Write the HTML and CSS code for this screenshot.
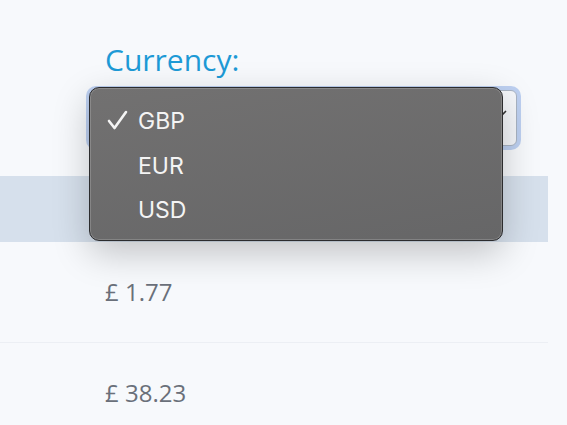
FILE: index.html
```html
<!DOCTYPE html>
<html>
<head>
<meta charset="UTF-8">
<title>Currency</title>
<link rel="stylesheet" href="styles.css">
</head>
<body>

<div class="filter">
	<label class="filter-label">Currency:</label>
	<div class="select">
		<svg class="chevron" width="14" height="10" viewBox="0 0 14 10"><path d="M2 2 L7 7 L12 2" fill="none" stroke="#333" stroke-width="1.6"/></svg>
	</div>

	<!-- open dropdown menu -->
	<ul class="menu">
		<li class="menu-item checked">
			<svg class="check" width="22" height="22" viewBox="0 0 22 22"><path d="M3 12 L8.5 19 L20 3" fill="none" stroke="#f4f4f4" stroke-width="2.6" stroke-linecap="round" stroke-linejoin="round"/></svg>
			GBP
		</li>
		<li class="menu-item">EUR</li>
		<li class="menu-item">USD</li>
	</ul>
</div>

<div class="list">
	<div class="row head"></div>
	<div class="row">£ 1.77</div>
	<div class="row">£ 38.23</div>
</div>

</body>
</html>
```

FILE: styles.css
```css
body
{
	margin: 0;
	background-color: #f7f9fc;
	font-family: "Open Sans", sans-serif;
	overflow: hidden;
}

.filter
{
	position: relative;
	padding: 40px 50px 0 90px;
}
.filter-label
{
	display: block;
	margin-left: 15px;
	font-size: 30px;
	line-height: 40px;
	color: #1d9ad6;
}
.select
{
	margin-top: 10px;
	height: 56px;
	box-sizing: border-box;
	border: 1px solid #a9b4c4;
	border-radius: 6px;
	background-color: #f5f7fb;
	box-shadow: 0 0 0 4px #bdd0f1;
	display: flex;
	align-items: center;
	justify-content: flex-end;
	padding: 0 8px 0 15px;
}
.chevron { margin-top: -8px; }

.menu
{
	position: absolute;
	left: 89px;
	top: 87px;
	width: 414px;
	height: 154px;
	box-sizing: border-box;
	margin: 0;
	padding: 11px 0 0 0;
	list-style: none;
	border: 1px solid #2c2c2e;
	border-radius: 10px;
	background: linear-gradient(170deg, #727171, #666667);
	box-shadow: inset 0 0 0 1px rgba(255,255,255,0.18), 0 12px 36px rgba(0,0,0,0.22);
	font-family: Inter, "Noto Sans", sans-serif;
	font-size: 23px;
	color: #f4f4f4;
}
.menu-item
{
	height: 44.5px;
	line-height: 44px;
	padding-left: 48px;
	position: relative;
}
.check
{
	position: absolute;
	left: 16px;
	top: 10px;
}

.list { width: 548px; margin-top: 30px; }
.row
{
	height: 100px;
	line-height: 100px;
	padding-left: 105px;
	font-size: 24px;
	color: #6a707a;
	border-bottom: 1px solid #eceff4;
}
.row.head
{
	height: 66px;
	background-color: #d6e0ec;
	border-bottom: none;
}
```
